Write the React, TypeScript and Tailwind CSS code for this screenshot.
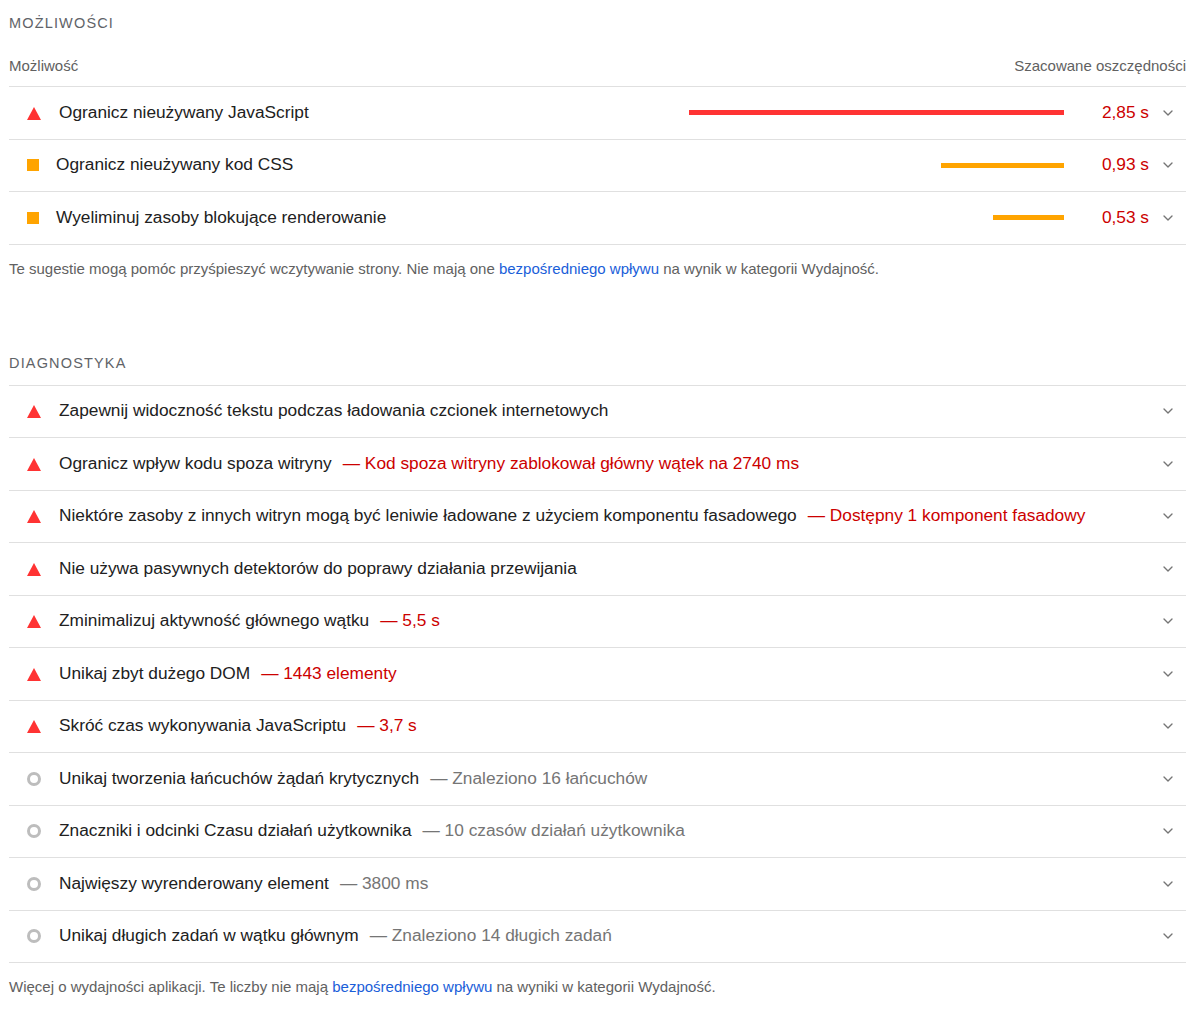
import { ChevronDown } from 'lucide-react';

type Kind = 'fail' | 'avg' | 'info';

function Icon({ kind }: { kind: Kind }) {
    if (kind === 'fail')
        return (
            <svg width="14" height="14" viewBox="0 0 14 14" className="shrink-0 ml-[18px] mr-[18px]">
                <polygon points="7,1 14,14 0,14" fill="#ff3333" />
            </svg>
        );
    if (kind === 'avg') return <span className="shrink-0 w-3 h-3 bg-[#ffa400] ml-[18px] mr-[18px]" />;
    return <span className="shrink-0 w-[14px] h-[14px] rounded-full border-[3px] border-[#bdbdbd] ml-[18px] mr-[18px]" />;
}

const opportunities = [
    { kind: 'fail' as Kind, title: 'Ogranicz nieużywany JavaScript', bar: 375, value: '2,85 s', color: 'bg-[#ff3333]' },
    { kind: 'avg' as Kind, title: 'Ogranicz nieużywany kod CSS', bar: 123, value: '0,93 s', color: 'bg-[#ffa400]' },
    { kind: 'avg' as Kind, title: 'Wyeliminuj zasoby blokujące renderowanie', bar: 71, value: '0,53 s', color: 'bg-[#ffa400]' },
];

const diagnostics: { kind: Kind; title: string; extra?: string }[] = [
    { kind: 'fail', title: 'Zapewnij widoczność tekstu podczas ładowania czcionek internetowych' },
    { kind: 'fail', title: 'Ogranicz wpływ kodu spoza witryny', extra: 'Kod spoza witryny zablokował główny wątek na 2740 ms' },
    { kind: 'fail', title: 'Niektóre zasoby z innych witryn mogą być leniwie ładowane z użyciem komponentu fasadowego', extra: 'Dostępny 1 komponent fasadowy' },
    { kind: 'fail', title: 'Nie używa pasywnych detektorów do poprawy działania przewijania' },
    { kind: 'fail', title: 'Zminimalizuj aktywność głównego wątku', extra: '5,5 s' },
    { kind: 'fail', title: 'Unikaj zbyt dużego DOM', extra: '1443 elementy' },
    { kind: 'fail', title: 'Skróć czas wykonywania JavaScriptu', extra: '3,7 s' },
    { kind: 'info', title: 'Unikaj tworzenia łańcuchów żądań krytycznych', extra: 'Znaleziono 16 łańcuchów' },
    { kind: 'info', title: 'Znaczniki i odcinki Czasu działań użytkownika', extra: '10 czasów działań użytkownika' },
    { kind: 'info', title: 'Najwięszy wyrenderowany element', extra: '3800 ms' },
    { kind: 'info', title: 'Unikaj długich zadań w wątku głównym', extra: 'Znaleziono 14 długich zadań' },
];

function Chevron() {
    return <ChevronDown className="w-4 h-4 text-[#757575] shrink-0 ml-[11px] mr-[10px]" strokeWidth={2} />;
}

export default function App() {
    return (
        <div className="bg-white px-[9px] pt-[13px] pb-6 text-[#212121]" style={{ fontFamily: '"Liberation Sans", Arial, sans-serif' }}>
            <h2 className="text-[14.5px] tracking-[0.08em] text-[#5f6368] h-[20px] leading-[20px]">MOŻLIWOŚCI</h2>
            <div className="flex justify-between text-[15px] leading-[18px] text-[#616161] mt-[24px] pb-[11px] border-b border-[#e0e0e0]">
                <span>Możliwość</span>
                <span>Szacowane oszczędności</span>
            </div>
            {opportunities.map((o) => (
                <div key={o.title} className="flex items-center h-[52.5px] border-b border-[#e0e0e0] text-[17.3px]">
                    <Icon kind={o.kind} />
                    <span className={o.kind === 'avg' ? '-ml-[1px]' : ''}>{o.title}</span>
                    <div className="flex-1" />
                    <div className={`h-[5px] ${o.color}`} style={{ width: o.bar }} />
                    <span className="w-[85px] text-right text-[#c00]">{o.value}</span>
                    <Chevron />
                </div>
            ))}
            <p className="text-[15px] leading-[18px] text-[#616161] mt-[15px]">
                Te sugestie mogą pomóc przyśpieszyć wczytywanie strony. Nie mają one{' '}
                <span className="text-[#1a5ed9]">bezpośredniego wpływu</span> na wynik w kategorii Wydajność.
            </p>
            <h2 className="text-[14.5px] leading-[20px] tracking-[0.08em] text-[#5f6368] mt-[75px] pb-[12px] border-b border-[#e0e0e0]">DIAGNOSTYKA</h2>
            {diagnostics.map((d) => (
                <div key={d.title} className="flex items-center h-[52.5px] border-b border-[#e0e0e0] text-[17.3px]">
                    <Icon kind={d.kind} />
                    <span>{d.title}</span>
                    {d.extra && (
                        <span className={`ml-[11px] ${d.kind === 'fail' ? 'text-[#c00]' : 'text-[#757575]'}`}>— {d.extra}</span>
                    )}
                    <div className="flex-1" />
                    <Chevron />
                </div>
            ))}
            <p className="text-[15px] leading-[18px] text-[#616161] mt-[15px]">
                Więcej o wydajności aplikacji. Te liczby nie mają{' '}
                <span className="text-[#1a5ed9]">bezpośredniego wpływu</span> na wyniki w kategorii Wydajność.
            </p>
        </div>
    );
}
